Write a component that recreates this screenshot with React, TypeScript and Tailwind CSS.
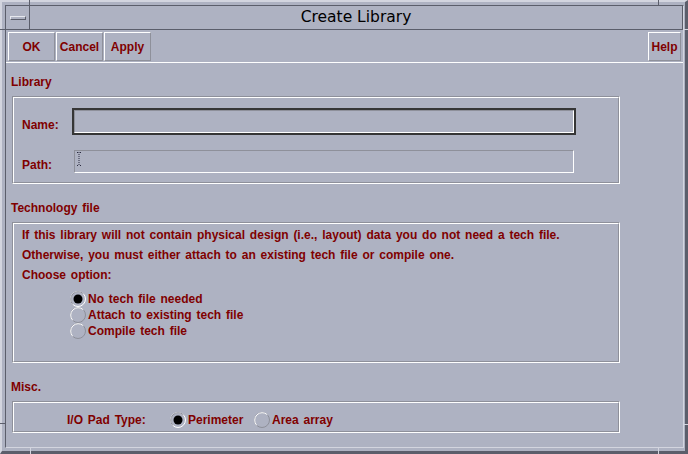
import React from 'react';

function Radio({ on }: { on: boolean }) {
  return (
    <svg width="16" height="16" viewBox="0 0 16 16" className="shrink-0 block">
      <circle cx="8" cy="8" r="7.5" fill="none" stroke={on ? '#ffffff' : '#8e909a'} strokeWidth="1" />
      <path d="M2.7 13.3 A7.5 7.5 0 0 1 13.3 2.7" fill="none" stroke={on ? '#8e909a' : '#ffffff'} strokeWidth="1" />
      {on && <circle cx="8" cy="8" r="4.5" fill="#000000" />}
    </svg>
  );
}

function Group({ children }: { children: React.ReactNode }) {
  return (
    <div className="ml-[6px] w-[608px] border-t border-l border-b border-r border-t-[#8e909a] border-l-[#8e909a] border-b-white border-r-white">
      <div className="border-t border-l border-b border-r border-t-white border-l-white border-b-[#8e909a] border-r-[#8e909a]">
        {children}
      </div>
    </div>
  );
}

function Btn({ label, w }: { label: string; w: string }) {
  return (
    <div
      className={`${w} h-[29px] flex items-center justify-center border-t border-l border-b border-r border-t-white border-l-white border-b-[#8e909a] border-r-[#8e909a] text-[12px] font-bold text-[#800000]`}
    >
      {label}
    </div>
  );
}

export default function App() {
  return (
    <div
      className="w-[688px] h-[454px] bg-[#aeb2c2] relative overflow-hidden"
      style={{ fontFamily: '"Liberation Sans", Arial, sans-serif' }}
    >
      <div className="w-full h-full border-l-2 border-t-2 border-r-[3px] border-b-[3px] border-l-[#d3d5df] border-t-[#d3d5df] border-r-[#5b5e6b] border-b-[#5b5e6b] pl-[3px] pt-[3px] pr-[1px] pb-[3px]">
        <div className="w-full h-full border-l border-t border-r border-b border-l-[#5b5e6b] border-t-[#5b5e6b] border-r-[#d3d5df] border-b-[#d3d5df] flex flex-col">
          {/* title bar */}
          <div className="h-[24px] flex border-b border-b-[#5b5e6b] shrink-0">
            <div className="w-[24px] h-full border-r border-r-[#5b5e6b] flex items-center justify-center">
              <div className="w-[16px] h-[4px] border-t border-l border-b border-r border-t-[#e6e8ee] border-l-[#e6e8ee] border-b-[#5b5e6b] border-r-[#5b5e6b] mt-[1px]" />
            </div>
            <div
              className="flex-1 flex items-center justify-center text-[15.5px] text-black border-r border-r-[#5b5e6b]"
              style={{ fontFamily: '"DejaVu Sans", sans-serif' }}
            >
              Create Library
            </div>
          </div>
          {/* toolbar */}
          <div className="h-[33px] shrink-0 border-b border-b-white flex items-start pt-[2px] px-[2px]">
            <div className="flex gap-[1px]">
              <Btn label="OK" w="w-[47px]" />
              <Btn label="Cancel" w="w-[47px]" />
              <Btn label="Apply" w="w-[47px]" />
            </div>
            <div className="flex-1" />
            <Btn label="Help" w="w-[33px]" />
          </div>
          {/* body */}
          <div className="flex-1 text-[12px] font-bold text-[#800000] [word-spacing:1.5px]">
            <div className="mt-[11px] ml-[5px] h-[16px] leading-[16px]">Library</div>
            <div className="mt-[6px]">
              <Group>
                <div className="pt-[10px] pb-[9px] pl-[8px]">
                  <div className="flex items-center h-[27px]">
                    <div className="w-[50px] mt-[6px]">Name:</div>
                    <div className="w-[504px] h-[27px] border-2 border-[#363636]">
                      <div className="w-full h-full border-t border-l border-b border-r border-t-[#8e909a] border-l-[#8e909a] border-b-white border-r-white" />
                    </div>
                  </div>
                  <div className="flex items-center h-[23px] mt-[15px]">
                    <div className="w-[52px] mt-[6px]">Path:</div>
                    <div className="w-[500px] h-[23px] border-t border-l border-b border-r border-t-[#8e909a] border-l-[#8e909a] border-b-white border-r-white pl-[2px] pt-[1px]">
                      <svg width="4" height="14" viewBox="0 0 4 14" className="block">
                        <path d="M0 0.5h1M3 0.5h1M2 2v1M2 4v1M2 6v1M2 8v1M2 10v1M0 13.5h1M3 13.5h1" stroke="#2a2a40" strokeWidth="1" />
                        <path d="M2 0v1M2 12v2" stroke="#2a2a40" strokeWidth="1" strokeDasharray="1 1" />
                      </svg>
                    </div>
                  </div>
                </div>
              </Group>
            </div>

            <div className="mt-[16px] ml-[5px] h-[16px] leading-[16px]">Technology file</div>
            <div className="mt-[6px]">
              <Group>
                <div className="pt-[1px] pb-[22px] pl-[8px]">
                  <div className="h-[20px] leading-[20px]">
                    If this library will not contain physical design (i.e., layout) data you do not need a tech file.
                  </div>
                  <div className="h-[20px] leading-[20px]">
                    Otherwise, you must either attach to an existing tech file or compile one.
                  </div>
                  <div className="h-[20px] leading-[20px]">Choose option:</div>
                  <div className="mt-[6px] ml-[48px] flex flex-col">
                    <div className="h-[16px] flex items-center gap-[2px]">
                      <Radio on={true} />
                      <span className="leading-[16px]">No tech file needed</span>
                    </div>
                    <div className="h-[16px] flex items-center gap-[2px]">
                      <Radio on={false} />
                      <span className="leading-[16px]">Attach to existing tech file</span>
                    </div>
                    <div className="h-[16px] flex items-center gap-[2px]">
                      <Radio on={false} />
                      <span className="leading-[16px]">Compile tech file</span>
                    </div>
                  </div>
                </div>
              </Group>
            </div>

            <div className="mt-[16px] ml-[5px] h-[16px] leading-[16px]">Misc.</div>
            <div className="mt-[6px]">
              <Group>
                <div className="pt-[9px] pb-[3px] pl-[53px] flex items-center h-[28px]">
                  <div className="w-[103px] leading-[16px]">I/O Pad Type:</div>
                  <div className="w-[84px] h-[16px] flex items-center gap-[2px]">
                    <Radio on={true} />
                    <span className="leading-[16px]">Perimeter</span>
                  </div>
                  <div className="h-[16px] flex items-center gap-[2px]">
                    <Radio on={false} />
                    <span className="leading-[16px]">Area array</span>
                  </div>
                </div>
              </Group>
            </div>
          </div>
        </div>
      </div>
      {/* frame corner ticks */}
      <div className="absolute left-[29px] top-0 w-[1px] h-[6px] bg-[#5b5e6b]" />
      <div className="absolute left-[658px] top-0 w-[1px] h-[6px] bg-[#5b5e6b]" />
      <div className="absolute left-0 top-[29px] w-[6px] h-[1px] bg-[#5b5e6b]" />
      <div className="absolute left-0 top-[423px] w-[6px] h-[1px] bg-[#5b5e6b]" />
      <div className="absolute right-0 top-[29px] w-[5px] h-[1px] bg-[#d3d5df]" />
      <div className="absolute right-0 top-[424px] w-[5px] h-[1px] bg-[#d3d5df]" />
      <div className="absolute left-[30px] bottom-0 w-[1px] h-[7px] bg-[#d3d5df]" />
      <div className="absolute left-[658px] bottom-0 w-[1px] h-[7px] bg-[#d3d5df]" />
    </div>
  );
}
